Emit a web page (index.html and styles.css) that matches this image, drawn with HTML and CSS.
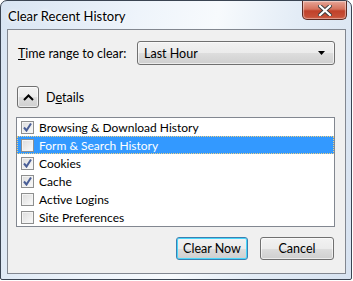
FILE: index.html
```html
<!DOCTYPE html>
<html lang="en">
  <head>
    <meta charset="UTF-8" />
    <title>Clear Recent History</title>
    <link rel="stylesheet" href="styles.css">
  </head>
  <body>
    <div class="window">
      <div class="title-bar">
        <span class="title">Clear Recent History</span>
        <button class="close-button" aria-label="Close">
          <svg width="14" height="11" viewBox="0 0 14 11">
            <path d="M2 1 L12 10 M12 1 L2 10" stroke="#3b3b3b" stroke-width="4" stroke-linecap="square" />
            <path d="M2 1 L12 10 M12 1 L2 10" stroke="#ffffff" stroke-width="2.2" stroke-linecap="square" />
          </svg>
        </button>
      </div>
      <div class="content">
        <div class="range-row">
          <label class="range-label"><u>T</u>ime range to clear:</label>
          <div class="select">
            <span>Last Hour</span>
            <svg width="7" height="4" viewBox="0 0 7 4"><path d="M0 0 H7 L3.5 4 Z" fill="#000" /></svg>
          </div>
        </div>
        <div class="details-row">
          <button class="details-button" aria-label="Hide details">
            <svg width="11" height="7" viewBox="0 0 11 7">
              <path d="M1 6 L5.5 1.5 L10 6" stroke="#000" stroke-width="2" fill="none" />
            </svg>
          </button>
          <span>D<u>e</u>tails</span>
        </div>
        <ul class="item-list">
          <li class="item"><span class="check checked"></span>Browsing &amp; Download History</li>
          <li class="item selected"><span class="check"></span>Form &amp; Search History</li>
          <li class="item"><span class="check checked"></span>Cookies</li>
          <li class="item"><span class="check checked"></span>Cache</li>
          <li class="item"><span class="check"></span>Active Logins</li>
          <li class="item"><span class="check"></span>Site Preferences</li>
        </ul>
        <div class="button-row">
          <button class="push default">Clear Now</button>
          <button class="push">Cancel</button>
        </div>
      </div>
    </div>
  </body>
</html>
```

FILE: styles.css
```css
body {
  margin: 0;
  background: #ffffff;
  font-family: Lato, "Noto Sans", sans-serif;
  font-size: 12px;
  color: #000;
}

.window {
  box-sizing: border-box;
  width: 352px;
  height: 280px;
  border: solid 1px #3a4452;
  border-radius: 7px 7px 2px 2px;
  padding: 0 5px 5px 6px;
  background: linear-gradient(100deg, #d8e4f2 0%, #eef4fb 35%, #f7fafd 55%, #e3ecf6 75%, #d7e2f0 100%);
  display: flex;
  flex-direction: column;
}

.title-bar {
  height: 28px;
  display: flex;
  justify-content: space-between;
  align-items: flex-start;
}

.title {
  margin-top: 7px;
  margin-left: 1px;
  font-size: 13px;
  text-shadow: 0 0 6px #ffffff, 0 0 3px #ffffff;
}

.close-button {
  width: 45px;
  height: 19px;
  margin-right: -1px;
  border: solid 1px #5b2a22;
  border-top: none;
  border-radius: 0 0 5px 5px;
  background: linear-gradient(#e6a596 0%, #d5735d 45%, #c0412a 55%, #c9553c 100%);
  box-shadow: inset 0 0 1px 1px rgba(255, 255, 255, 0.45);
  display: flex;
  align-items: center;
  justify-content: center;
  padding: 0;
}

.content {
  flex: 1;
  border: solid 1px #828790;
  background: #f0f0f0;
  padding: 0 10px 0 8px;
  display: flex;
  flex-direction: column;
}

.range-row {
  display: flex;
  align-items: center;
  margin-top: 11px;
}

.range-label {
  margin-left: 2px;
  width: 119px;
  font-size: 12.5px;
}

.select {
  box-sizing: border-box;
  width: 198px;
  height: 24px;
  border: solid 1px #707070;
  border-radius: 3px;
  background: linear-gradient(#f2f2f2 0%, #ebebeb 50%, #dddddd 51%, #cfcfcf 100%);
  box-shadow: inset 0 0 0 1px rgba(255, 255, 255, 0.6);
  display: flex;
  align-items: center;
  justify-content: space-between;
  padding: 0 9px 0 6px;
  font-size: 12.5px;
}

.details-row {
  display: flex;
  align-items: center;
  margin-top: 21px;
  font-size: 12.5px;
}

.details-button {
  box-sizing: border-box;
  width: 22px;
  height: 22px;
  margin-left: 1px;
  margin-right: 7px;
  border: solid 1px #707070;
  border-radius: 3px;
  background: linear-gradient(#f2f2f2 0%, #ebebeb 50%, #dddddd 51%, #cfcfcf 100%);
  box-shadow: inset 0 0 0 1px rgba(255, 255, 255, 0.6);
  display: flex;
  align-items: center;
  justify-content: center;
  padding: 0;
}

.item-list {
  list-style: none;
  margin: 9px 0 0 0;
  padding: 0;
  border: solid 1px #828790;
  background: #ffffff;
}

.item {
  height: 18px;
  display: flex;
  align-items: center;
  padding-left: 4px;
  box-sizing: border-box;
}

.item.selected {
  background: #3399ff;
  color: #ffffff;
  outline: dotted 1px #f0d080;
  outline-offset: -1px;
}

.check {
  box-sizing: border-box;
  width: 13px;
  height: 13px;
  margin-right: 5px;
  border: solid 1px #8e8f8f;
  background: linear-gradient(135deg, #dcdcdc, #fbfbfb);
  box-shadow: inset 0 0 0 1px #f4f4f4;
}

.check.checked {
  background: url("data:image/svg+xml,%3Csvg xmlns='http://www.w3.org/2000/svg' width='11' height='11'%3E%3Cpath d='M2 5.5 L4.5 8.5 L9 1.5' stroke='%234a5f97' stroke-width='2' fill='none'/%3E%3C/svg%3E") center no-repeat, linear-gradient(135deg, #dcdcdc, #fbfbfb);
}

.button-row {
  display: flex;
  justify-content: flex-end;
  gap: 12px;
  margin-top: 10px;
  margin-right: 1px;
}

.push {
  box-sizing: border-box;
  height: 23px;
  width: 74px;
  border: solid 1px #707070;
  border-radius: 3px;
  background: linear-gradient(#f2f2f2 0%, #ebebeb 50%, #dddddd 51%, #cfcfcf 100%);
  box-shadow: inset 0 0 0 1px rgba(255, 255, 255, 0.6);
  font-family: inherit;
  font-size: 12.5px;
  color: #000;
  padding: 0;
}

.push.default {
  width: 72px;
  border-color: #3c7fb1;
  box-shadow: inset 0 0 0 1px #48d7fb;
}
```
